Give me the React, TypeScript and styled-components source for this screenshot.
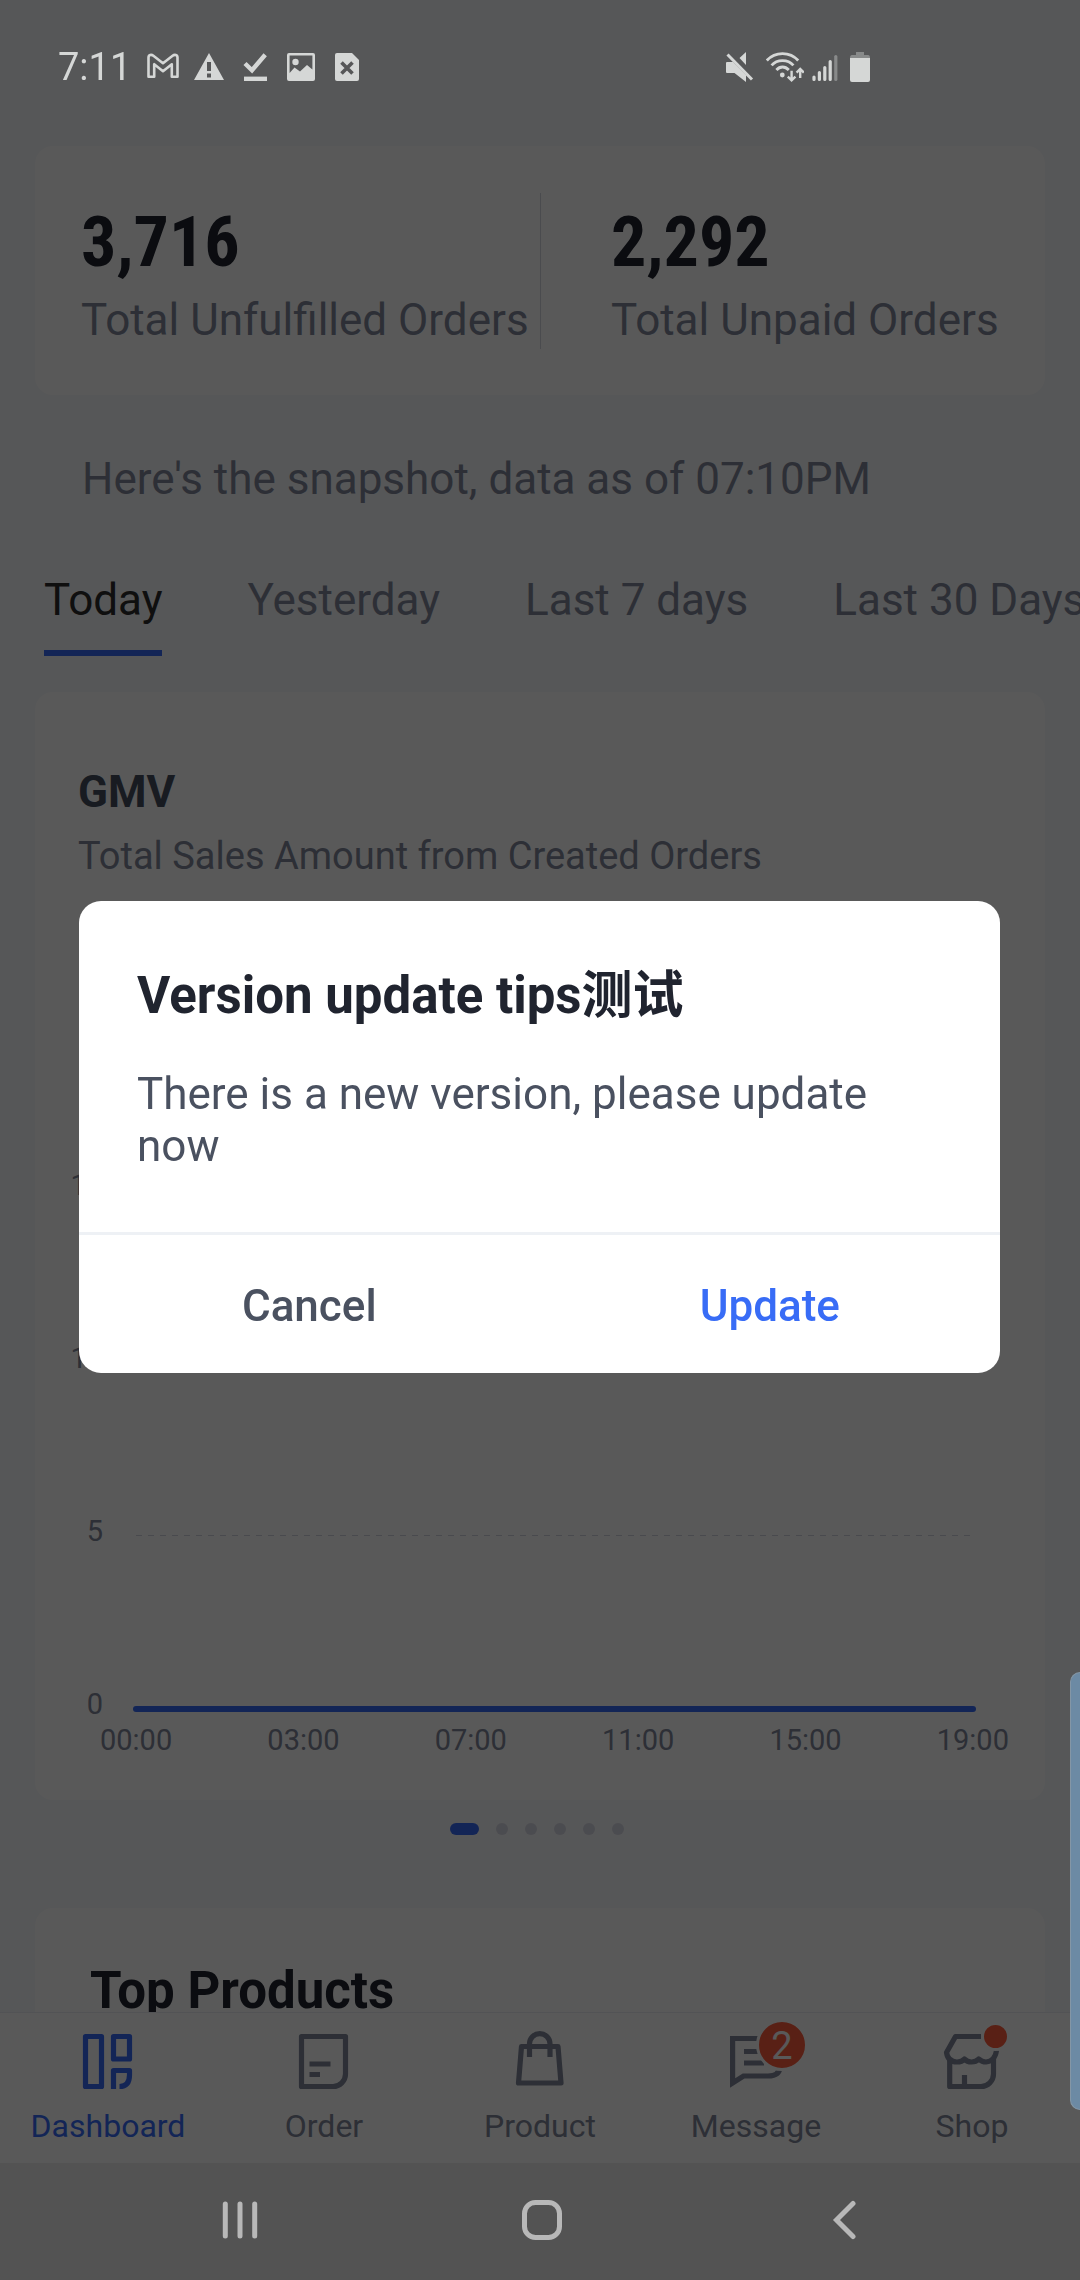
import React, { useState } from "react";
import styled, { createGlobalStyle } from "styled-components";

const color = {
  page: "#f7f8fb",
  card: "#ffffff",
  ink: "#20242f",
  heading: "#464f5f",
  muted: "#80889a",
  body: "#4a5160",
  blue: "#386cf6",
  red: "#ff5c3c",
  system: "#d5d7d6",
};

const Global = createGlobalStyle`
  * { box-sizing: border-box; }
  body {
    margin: 0;
    background: ${color.page};
    font-family: Roboto, "Noto Sans CJK SC", sans-serif;
  }
  button { font-family: inherit; border: 0; background: none; padding: 0; }
  h1, h2, p, dl, dt, dd, ul, ol { margin: 0; padding: 0; list-style: none; }
`;

const Shell = styled.div`
  display: flex;
  flex-direction: column;
  height: 100vh;
  overflow: hidden;
  background: ${color.page};
`;

/* ---------- status bar ---------- */

const StatusBar = styled.header`
  position: relative;
  z-index: 2;
  flex: none;
  display: flex;
  justify-content: space-between;
  align-items: center;
  height: 134px;
  padding: 0 210px 0 58px;
  color: ${color.system};
`;

const StatusGroup = styled.div<{ $gap: number }>`
  display: flex;
  align-items: center;
  gap: ${(p) => p.$gap}px;
  svg { display: block; }
`;

const Clock = styled.time`
  width: 75px;
  font-size: 38px;
  line-height: 46px;
`;

/* ---------- dashboard ---------- */

const Main = styled.main`
  flex: 1 1 0;
  min-height: 0;
  overflow: hidden;
  padding-top: 12px;
`;

const Card = styled.section`
  margin: 0 35px;
  border-radius: 18px;
  background: ${color.card};
`;

const StatsCard = styled(Card)`
  display: grid;
  grid-template-columns: repeat(2, minmax(0, 1fr));
  padding: 47px 0 46px;
`;

const Stat = styled.dl<{ $divided?: boolean }>`
  display: flex;
  flex-direction: column-reverse;
  justify-content: flex-end;
  gap: 16px;
  height: 156px;
  padding: 13px 0 0 ${(p) => (p.$divided ? 70 : 46)}px;
  border-left: ${(p) => (p.$divided ? "1px solid #d5d8e0" : "0")};
  white-space: nowrap;
`;

const StatValue = styled.dd`
  color: ${color.ink};
  font-family: "Roboto Condensed", "Liberation Sans Narrow", Roboto, sans-serif;
  font-size: 70px;
  font-weight: 700;
  line-height: 72px;
`;

const StatLabel = styled.dt`
  color: ${color.muted};
  font-size: 44px;
  line-height: 52px;
`;

const Snapshot = styled.p`
  padding: 58px 80px 69px 82px;
  color: ${color.muted};
  font-size: 44px;
  line-height: 52px;
`;

const Periods = styled.div`
  display: flex;
  gap: 85px;
  margin-bottom: 36px;
  padding-left: 44px;
  overflow: hidden;
`;

const Period = styled.button<{ $active: boolean }>`
  flex: none;
  padding-bottom: 24px;
  border-bottom: 6px solid ${(p) => (p.$active ? color.blue : "transparent")};
  color: ${(p) => (p.$active ? "#2b2b2b" : color.muted)};
  font-size: 44px;
  line-height: 52px;
  white-space: nowrap;
`;

const ChartCard = styled(Card)`
  padding: 74px 0 42px;
`;

const ChartTitle = styled.h2`
  padding: 0 43px;
  color: ${color.heading};
  font-size: 44px;
  font-weight: 700;
  line-height: 52px;
`;

const ChartNote = styled.p`
  margin: 15px 0 288px;
  padding: 0 43px;
  color: ${color.muted};
  font-size: 38px;
  line-height: 46px;
`;

const Level = styled.div<{ $base: boolean }>`
  display: flex;
  gap: 30px;
  height: ${(p) => (p.$base ? 36 : 173)}px;
  padding: 0 69px 0 31px;
`;

const AxisText = styled.span`
  color: ${color.muted};
  font-size: 29px;
  line-height: 36px;
`;

const LevelLabel = styled(AxisText)`
  width: 37px;
  text-align: right;
`;

const GridLine = styled.div`
  flex: 1;
  height: 1px;
  margin: 22px 3px 0;
  background: repeating-linear-gradient(90deg, #d2d5de 0 6px, transparent 6px 12px);
`;

const SeriesLine = styled.div`
  flex: 1;
  height: 6px;
  margin-top: 20px;
  border-radius: 3px;
  background: ${color.blue};
`;

const Hours = styled.div`
  display: flex;
  justify-content: space-between;
  padding: 0 36px 0 65px;
`;

const Pager = styled.div`
  display: flex;
  justify-content: center;
  gap: 17px;
  padding: 23px 6px 73px 0;
`;

const PagerDot = styled.span<{ $active: boolean }>`
  width: ${(p) => (p.$active ? 29 : 12)}px;
  height: 12px;
  border-radius: 6px;
  background: ${(p) => (p.$active ? color.blue : "#d8d9e5")};
`;

const ProductsCard = styled(Card)`
  padding: 53px 55px;
`;

const ProductsTitle = styled.h2`
  color: ${color.ink};
  font-size: 51px;
  font-weight: 700;
  line-height: 60px;
`;

/* ---------- bottom navigation ---------- */

const TabBar = styled.nav`
  flex: none;
  display: grid;
  grid-template-columns: repeat(5, 1fr);
  padding: 15px 0 17px;
  border-top: 1px solid #ebeef3;
  background: ${color.card};
`;

const TabButton = styled.button<{ $active?: boolean }>`
  display: flex;
  flex-direction: column;
  align-items: center;
  gap: 14px;
  color: ${(p) => (p.$active ? color.blue : color.muted)};
  font-size: 32px;
  line-height: 40px;
`;

const TabIcon = styled.span`
  position: relative;
  display: block;
  width: 72px;
  height: 64px;
  svg { display: block; }
`;

const CountBadge = styled.span`
  position: absolute;
  top: -9px;
  left: 36px;
  width: 52px;
  height: 52px;
  border: 3px solid ${color.card};
  border-radius: 50%;
  background: ${color.red};
  color: #ffffff;
  font-size: 38px;
  line-height: 48px;
  text-align: center;
`;

const DotBadge = styled.span`
  position: absolute;
  top: -6px;
  left: 45px;
  width: 29px;
  height: 29px;
  border: 3px solid ${color.card};
  border-radius: 50%;
  background: ${color.red};
`;

const SystemBar = styled.footer`
  position: relative;
  z-index: 2;
  flex: none;
  display: grid;
  grid-template-columns: repeat(3, 1fr);
  height: 117px;
  padding: 0 85px 3px 89px;
  background: #535353;
`;

const SystemButton = styled.button`
  display: flex;
  align-items: center;
  justify-content: center;
  color: #b8b8b8;
`;

/* ---------- overlay parts ---------- */

const Backdrop = styled.div`
  position: fixed;
  inset: 0;
  z-index: 1;
  display: flex;
  align-items: center;
  padding: 0 80px 6px 79px;
  background: rgba(0, 0, 0, 0.65);
`;

const Dialog = styled.div`
  width: 100%;
  overflow: hidden;
  border-radius: 22px;
  background: ${color.card};
`;

const DialogText = styled.div`
  display: flex;
  flex-direction: column;
  gap: 42px;
  padding: 65px 58px 60px;
`;

const DialogTitle = styled.h1`
  color: ${color.ink};
  font-size: 51px;
  font-weight: 700;
  line-height: 60px;
`;

const DialogMessage = styled.p`
  color: ${color.body};
  font-size: 44px;
  line-height: 52px;
`;

const DialogActions = styled.div`
  display: flex;
  border-top: 3px solid #eef1f5;
`;

const DialogButton = styled.button<{ $primary?: boolean }>`
  flex: 1;
  height: 138px;
  padding-top: 4px;
  color: ${(p) => (p.$primary ? color.blue : color.body)};
  font-size: 44px;
  font-weight: 500;
  line-height: 52px;
`;

const EdgeHandle = styled.div`
  position: fixed;
  right: 0;
  bottom: 170px;
  z-index: 3;
  width: 10px;
  height: 438px;
  border: 1px solid #8496a5;
  border-right: 0;
  border-radius: 14px 0 0 14px;
  background: #6c8aa4;
`;

/* ---------- icons ---------- */

const MailIcon = () => (
  <svg width="32" height="32" viewBox="0 0 32 32" fill="none" stroke="currentColor" strokeWidth="2.6" strokeLinejoin="round">
    <path d="M1.5 6.5C1.5 3.6 4.4 3.2 6.4 4.7L16 12.2L25.6 4.7C27.6 3.2 30.5 3.6 30.5 6.5V25.7H24.8V13.2L16 20.2L7.2 13.2V25.7H1.5Z" />
  </svg>
);

const WarningIcon = () => (
  <svg width="32" height="32" viewBox="0 0 32 32" fill="currentColor">
    <path fillRule="evenodd" d="M16 2L31 29H1ZM14 11V20H18V11ZM14 22.5V26.5H18V22.5Z" />
  </svg>
);

const DoneIcon = () => (
  <svg width="32" height="32" viewBox="0 0 32 32" fill="none" stroke="currentColor" strokeWidth="4.4">
    <path d="M6 12.5L13 19.3L26.2 3.8" />
    <path d="M5 27.8H28" />
  </svg>
);

const PictureIcon = () => (
  <svg width="32" height="32" viewBox="0 0 32 32" fill="currentColor">
    <path fillRule="evenodd" d="M4 2H28A2 2 0 0 1 30 4V28A2 2 0 0 1 28 30H4A2 2 0 0 1 2 28V4A2 2 0 0 1 4 2ZM4.6 4.6V22L9.5 16.5L15 20.5L22 14L27.4 18.5V4.6Z" />
    <circle cx="10.5" cy="11" r="3.2" />
  </svg>
);

const FileErrorIcon = () => (
  <svg width="32" height="32" viewBox="0 0 32 32" fill="none">
    <path fill="currentColor" d="M6 2H21L28 9V28A2 2 0 0 1 26 30H6A2 2 0 0 1 4 28V4A2 2 0 0 1 6 2Z" />
    <path d="M10.5 11.5L21.5 22.5M21.5 11.5L10.5 22.5" stroke="#565758" strokeWidth="3.6" />
  </svg>
);

const MuteIcon = () => (
  <svg width="32" height="32" viewBox="0 0 32 32">
    <path fill="currentColor" d="M0 12Q0 11 1 11H7L20 24V31L8.5 22H1Q0 22 0 21ZM20 1V14L13.5 7Z" />
    <path d="M1.5 3.5L26 28.5" stroke="currentColor" strokeWidth="3" />
  </svg>
);

const WifiIcon = () => (
  <svg width="38" height="32" viewBox="0 0 38 32" fill="none" stroke="currentColor">
    <g strokeWidth="2.8">
      <path d="M.8 9.5C9 .2 24 .2 32.2 9.5" />
      <path d="M5.6 14.4C11 8 22 8 27.4 14.4" />
      <path d="M10.4 19C14 15 19 15 22.8 19" />
    </g>
    <circle cx="16.3" cy="24" r="2.4" fill="currentColor" stroke="none" />
    <path strokeWidth="2.4" d="M25.6 19.8V29.5M21.8 25.6L25.6 29.4L29.4 25.6M34.2 27V18M30.6 21.6L34.2 18L37.8 21.6" />
  </svg>
);

const SignalIcon = () => (
  <svg width="30" height="32" viewBox="0 0 30 32" fill="none" stroke="currentColor" strokeWidth="3.2" strokeLinecap="round">
    <path d="M2 26V28.5M7.4 21.5V28.5M12.8 16.5V28.5M18.2 10.5V28.5" />
    <path d="M23.8 5.5V28.5" opacity=".4" />
  </svg>
);

const BatteryIcon = () => (
  <svg width="20" height="32" viewBox="0 0 20 32" fill="currentColor">
    <path opacity=".4" d="M6 1H14V4H18Q20 4 20 7H0Q0 4 2 4H6Z" />
    <path d="M0 7H20V29Q20 31 18 31H2Q0 31 0 29Z" />
  </svg>
);

const TabGlyph = ({ children }: { children: React.ReactNode }) => (
  <svg width="72" height="64" viewBox="0 0 72 64" fill="none" stroke="currentColor" strokeWidth="5.2" aria-hidden="true">
    {children}
  </svg>
);

const DashboardGlyph = () => (
  <TabGlyph>
    <g strokeLinejoin="round">
      <path d="M13.5 8.5H29.5V58.5H13.5Z" />
      <path d="M41.5 8.5H57.5V31H41.5Z" />
      <path d="M41.5 61V42.5H57.5V47Q57.5 58.5 47.5 58.5" />
    </g>
  </TabGlyph>
);

const OrderGlyph = () => (
  <TabGlyph>
    <path strokeLinejoin="round" d="M13.5 8.5H57.5V46A12.5 12.5 0 0 1 45 58.5H13.5Z" />
    <path d="M21.5 36H42.5M21.5 46.5H32" />
  </TabGlyph>
);

const ProductGlyph = () => (
  <TabGlyph>
    <path strokeLinejoin="round" d="M17.5 18.5H54L57 55H14.5Z" />
    <path d="M25.5 29V15.8A10.25 10.25 0 0 1 46 15.8V29" />
  </TabGlyph>
);

const MessageGlyph = () => (
  <TabGlyph>
    <path d="M60 10.5H12.6V55L23.5 48H48Q60 48 60 38Z" strokeMiterlimit="3" />
    <path d="M24 23.5H44M24 35H44" />
  </TabGlyph>
);

const ShopGlyph = () => (
  <TabGlyph>
    <g strokeLinejoin="round">
      <path d="M45 8.5H19.5L10.5 24.5Q12 34 21 34Q26 34 28.5 31Q31 34 35.5 34Q40 34 42.7 31Q46 34 50 34Q59 33 60.5 22.5" />
      <path d="M13.7 31V58.5H45A12.5 12.5 0 0 0 57.5 46V31" />
    </g>
    <path d="M28.5 47V58" />
  </TabGlyph>
);

const RecentsIcon = () => (
  <svg width="40" height="40" viewBox="0 0 40 40" stroke="currentColor" strokeWidth="5" strokeLinecap="round">
    <path d="M5.3 4V36M20 4V36M34.7 4V36" />
  </svg>
);

const HomeIcon = () => (
  <svg width="42" height="42" viewBox="0 0 42 42" fill="none" stroke="currentColor" strokeWidth="5">
    <rect x="3.5" y="3.5" width="35" height="35" rx="11" />
  </svg>
);

const BackIcon = () => (
  <svg width="24" height="40" viewBox="0 0 24 40" fill="none" stroke="currentColor" strokeWidth="5" strokeLinecap="round">
    <path d="M21 3.5L4.5 20L21 36.5" />
  </svg>
);

/* ---------- data ---------- */

const stats = [
  { value: "3,716", label: "Total Unfulfilled Orders" },
  { value: "2,292", label: "Total Unpaid Orders" },
];
const periods = ["Today", "Yesterday", "Last 7 days", "Last 30 Days"];
const levels = [15, 10, 5, 0];
const hours = ["00:00", "03:00", "07:00", "11:00", "15:00", "19:00"];
const slides = 6;
const tabs = [
  { name: "Dashboard", glyph: <DashboardGlyph /> },
  { name: "Order", glyph: <OrderGlyph /> },
  { name: "Product", glyph: <ProductGlyph /> },
  { name: "Message", glyph: <MessageGlyph />, badge: <CountBadge>2</CountBadge> },
  { name: "Shop", glyph: <ShopGlyph />, badge: <DotBadge /> },
];

export default function App() {
  const [period, setPeriod] = useState("Today");
  const [tab, setTab] = useState("Dashboard");
  const [dialogOpen, setDialogOpen] = useState(true);
  const close = () => setDialogOpen(false);

  return (
    <Shell>
      <Global />
      <StatusBar>
        <StatusGroup $gap={14}>
          <Clock>7:11</Clock>
          <MailIcon />
          <WarningIcon />
          <DoneIcon />
          <PictureIcon />
          <FileErrorIcon />
        </StatusGroup>
        <StatusGroup $gap={8}>
          <MuteIcon />
          <WifiIcon />
          <SignalIcon />
          <BatteryIcon />
        </StatusGroup>
      </StatusBar>

      <Main>
        <StatsCard>
          {stats.map((s, i) => (
            <Stat key={s.label} $divided={i > 0}>
              <StatLabel>{s.label}</StatLabel>
              <StatValue>{s.value}</StatValue>
            </Stat>
          ))}
        </StatsCard>

        <Snapshot>Here's the snapshot, data as of 07:10PM</Snapshot>

        <Periods>
          {periods.map((p) => (
            <Period key={p} $active={p === period} onClick={() => setPeriod(p)}>
              {p}
            </Period>
          ))}
        </Periods>

        <ChartCard>
          <ChartTitle>GMV</ChartTitle>
          <ChartNote>Total Sales Amount from Created Orders</ChartNote>
          {levels.map((level) => (
            <Level key={level} $base={level === 0}>
              <LevelLabel>{level}</LevelLabel>
              {level === 0 ? <SeriesLine /> : <GridLine />}
            </Level>
          ))}
          <Hours>
            {hours.map((h) => (
              <AxisText key={h}>{h}</AxisText>
            ))}
          </Hours>
        </ChartCard>

        <Pager>
          {Array.from({ length: slides }, (_, i) => (
            <PagerDot key={i} $active={i === 0} />
          ))}
        </Pager>

        <ProductsCard>
          <ProductsTitle>Top Products</ProductsTitle>
        </ProductsCard>
      </Main>

      <TabBar>
        {tabs.map((t) => (
          <TabButton key={t.name} $active={t.name === tab} onClick={() => setTab(t.name)}>
            <TabIcon>
              {t.glyph}
              {t.badge}
            </TabIcon>
            {t.name}
          </TabButton>
        ))}
      </TabBar>

      <SystemBar>
        <SystemButton aria-label="Recent apps"><RecentsIcon /></SystemButton>
        <SystemButton aria-label="Home"><HomeIcon /></SystemButton>
        <SystemButton aria-label="Back"><BackIcon /></SystemButton>
      </SystemBar>

      {dialogOpen && (
        <Backdrop>
          <Dialog role="dialog" aria-modal="true" aria-labelledby="update-title">
            <DialogText>
              <DialogTitle id="update-title">Version update tips测试</DialogTitle>
              <DialogMessage>There is a new version, please update now</DialogMessage>
            </DialogText>
            <DialogActions>
              <DialogButton onClick={close}>Cancel</DialogButton>
              <DialogButton $primary onClick={close}>Update</DialogButton>
            </DialogActions>
          </Dialog>
        </Backdrop>
      )}
      <EdgeHandle />
    </Shell>
  );
}
